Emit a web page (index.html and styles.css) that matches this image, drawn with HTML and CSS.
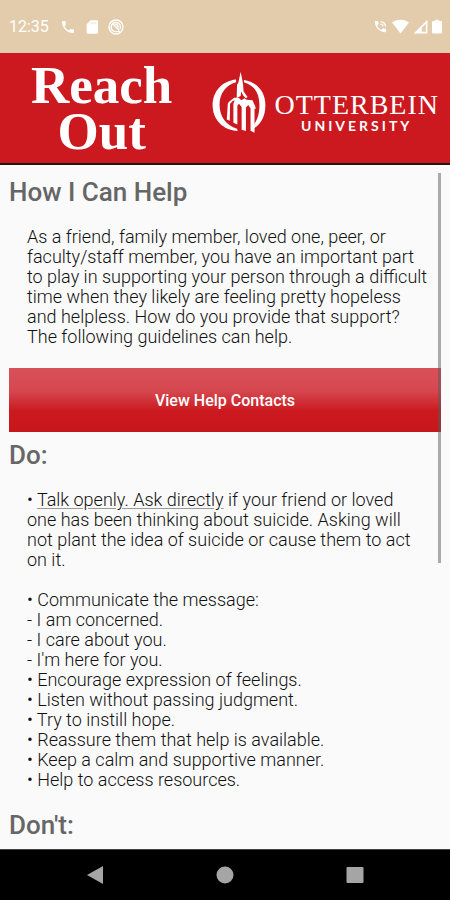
FILE: index.html
```html
<!DOCTYPE html>
<html lang="en">
<head>
<meta charset="utf-8">
<meta name="viewport" content="width=device-width, initial-scale=1">
<title>Reach Out</title>
<link rel="stylesheet" href="styles.css">
</head>
<body>
<div class="status">
  <span class="clock">12:35</span>
  <svg class="icon" viewBox="0 0 24 24"><path d="M20 15.5c-1.2 0-2.5-.2-3.6-.6-.3-.1-.7 0-1 .3l-2.200 2.200c-2.800-1.500-5.100-3.700-6.600-6.600l2.200-2.200c.3-.3.4-.7.3-1C8.700 6.500 8.500 5.200 8.500 4c0-.6-.4-1-1-1H4c-.6 0-1 .4-1 1 0 9.400 7.600 17 17 17 .6 0 1-.4 1-1v-3.500c0-.6-.4-1-1-1z"/></svg>
  <svg class="icon" viewBox="0 0 24 24"><path fill-rule="evenodd" d="M19 2h-9L4 8v12c0 1.100.9 2 2 2h13c1.100 0 2-.9 2-2V4c0-1.100-.9-2-2-2zM10 5h1v3h-1zm3 0h1v3h-1zm3 0h1v3h-1z"/></svg>
  <svg class="icon" viewBox="0 0 24 24"><g fill="none" stroke="#fff" stroke-width="2"><circle cx="12" cy="12" r="10.500"/><path d="M18 15A7 7 0 1 0 12 19h6M7 7l10 10"/><path d="M10 8a4 4 0 0 1 5 5"/></g></svg>
  <span class="grow"></span>
  <div class="signals">
    <svg class="icon" viewBox="0 0 24 24"><path d="M20 15.500c-1.200 0-2.500-.2-3.600-.6-.3-.1-.7 0-1 .3l-2.200 2.200c-2.800-1.500-5.100-3.700-6.600-6.600l2.200-2.200c.3-.3.4-.7.3-1C8.700 6.500 8.500 5.200 8.500 4c0-.6-.4-1-1-1H4c-.6 0-1 .4-1 1 0 9.400 7.600 17 17 17 .6 0 1-.4 1-1v-3.500c0-.6-.4-1-1-1zM19 12h2a9 9 0 0 0-9-9v2a7 7 0 0 1 7 7zm-4 0h2a5 5 0 0 0-5-5v2a3 3 0 0 1 3 3z"/></svg>
    <svg class="icon wifi" viewBox="0 0 24 20"><path d="M12 20L0 4.500C3 2 7 .5 12 .5s9 1.500 12 4z"/></svg>
    <svg class="icon" viewBox="0 0 24 24"><path fill-rule="evenodd" d="M1 23L23 1v22zM14 20.500h6.500V7.500L14 14z"/></svg>
    <svg class="icon battery" viewBox="0 0 16 24"><path d="M14.500 3H11V1H5v2H1.500C.7 3 0 3.700 0 4.500v17c0 .8.7 1.500 1.500 1.500h13c.8 0 1.500-.7 1.500-1.500v-17c0-.8-.7-1.500-1.500-1.500z"/></svg>
  </div>
</div>
<header class="banner">
  <h1 class="title">Reach<br>Out</h1>
  <div class="brand">
    <svg class="emblem" viewBox="12 8 162 188">
      <path d="M84 34C42 38 13 70 13 112c0 44 32 76 76 78l-2-7C54 172 34 146 34 110c0-34 20-60 50-68z"/>
      <path d="M108 35c40 6 65 36 65 76 0 36-14 58-36 72l-3-8c14-14 21-36 21-64 0-36-16-60-47-69z"/>
      <path d="M98 10l7 36 2 24 12 17-5 4-8-8-6-13-2 14-12 6 1-40 4-6z"/>
      <path d="M52 120l10-18 16-13h14l8 8 10-6 6 4 18 2 8 18 2 8-4-1v73l-12-6v-68l-7-10-7 8v71l-13-4v-69l-8-10-5 6v57l-12-5v-58l4-10-6 2-8 8-1 52-9-4 3-48z"/>
    </svg>
    <div class="wordmark">
      <span class="name">OTTERBEIN</span>
      <span class="kind">UNIVERSITY</span>
    </div>
  </div>
</header>
<main class="content">
  <h2>How I Can Help</h2>
  <p class="intro">As a friend, family member, loved one, peer, or faculty/staff member, you have an important part to play in supporting your person through a difficult time when they likely are feeling pretty hopeless and helpless. How do you provide that support? The following guidelines can help.</p>
  <button class="contacts" type="button">View Help Contacts</button>
  <h2>Do:</h2>
  <p>• <a href="#talk">Talk openly. Ask directly</a> if your friend or loved one has been thinking about suicide. Asking will not plant the idea of suicide or cause them to act on it.</p>
  <p>• Communicate the message:<br>- I am concerned.<br>- I care about you.<br>- I'm here for you.<br>• Encourage expression of feelings.<br>• Listen without passing judgment.<br>• Try to instill hope.<br>• Reassure them that help is available.<br>• Keep a calm and supportive manner.<br>• Help to access resources.</p>
  <h2>Don't:</h2>
  <div class="scrollbar"></div>
</main>
<nav class="navbar">
  <button type="button" aria-label="Back"><svg viewBox="0 0 20 20"><path d="M2 10L18 1v18z"/></svg></button>
  <button type="button" aria-label="Home"><svg viewBox="0 0 20 20"><circle cx="10" cy="10" r="8.500"/></svg></button>
  <button type="button" aria-label="Recent apps"><svg viewBox="0 0 20 20"><rect x="1.500" y="2" width="17" height="16" rx="1"/></svg></button>
</nav>
</body>
</html>
```
FILE: styles.css
```css
* { box-sizing: border-box; }

body {
  margin: 0;
  height: 100vh;
  display: flex;
  flex-direction: column;
  background: #fafafa;
  color: #111;
  font-family: Roboto, sans-serif;
  font-size: 18px;
  font-weight: 300;
  line-height: 20px;
}

.status {
  flex: none;
  display: flex;
  align-items: center;
  gap: 8px;
  height: 53px;
  padding: 0 8px 0 9px;
  background: #e2ccac;
  color: #fff;
}

.clock { margin-right: 3px; font-size: 16px; font-weight: 400; }
.icon { width: 16px; height: 16px; fill: #fff; }
.grow { flex: 1; }
.signals { display: flex; align-items: center; gap: 4px; }
.signals .icon { width: 15px; height: 15px; }
.signals .wifi { width: 17px; }
.signals .battery { width: 10px; }

.banner {
  flex: none;
  display: flex;
  align-items: center;
  justify-content: space-between;
  padding: 9px 11px 9px 31px;
  background: #cb191f;
  border-bottom: 2px solid #241415;
  color: #fff;
}

.title {
  margin: 0;
  font: bold 53px/46px "Liberation Serif", serif;
  text-align: center;
}

.brand {
  display: flex;
  align-items: flex-end;
  gap: 8px;
  margin-bottom: 12px;
}

.emblem { width: 54px; height: 62px; fill: #fff; }

.wordmark {
  display: flex;
  flex-direction: column;
  align-items: center;
}

.name { font: 28px/28px "Liberation Serif", serif; letter-spacing: 1px; }
.kind { font: bold 14px/14px Lato, sans-serif; letter-spacing: 3px; }

.content {
  position: relative;
  flex: 1;
  min-height: 0;
  overflow: hidden;
  padding: 12px 9px 0;
}

h2 {
  margin: 0 0 20px;
  color: #666;
  font-size: 26px;
  font-weight: 500;
  line-height: 30px;
}

p { margin: 0 18px 20px; }
p a { color: inherit; text-decoration-color: #999; text-underline-offset: 2px; }
.intro { margin: 0 12px 21px 18px; }

.contacts {
  display: block;
  width: 100%;
  height: 64px;
  margin-bottom: 8px;
  padding: 2px 0 0;
  border: 0;
  background: linear-gradient(#d9505a, #d64850 35%, #cb191f 68%, #c8171c);
  color: #fff;
  font: 500 16px/20px Roboto, sans-serif;
}

.scrollbar {
  position: absolute;
  top: 8px;
  right: 9px;
  width: 3px;
  height: 57%;
  background: rgba(90, 90, 90, 0.5);
}

.navbar {
  flex: none;
  display: flex;
  justify-content: center;
  gap: 110px;
  height: 51px;
  background: #000;
  border-top: 1px solid #444;
}

.navbar button { width: 20px; padding: 0; border: 0; background: none; }
.navbar svg { display: block; width: 20px; height: 20px; fill: #a5a5a5; }
```
